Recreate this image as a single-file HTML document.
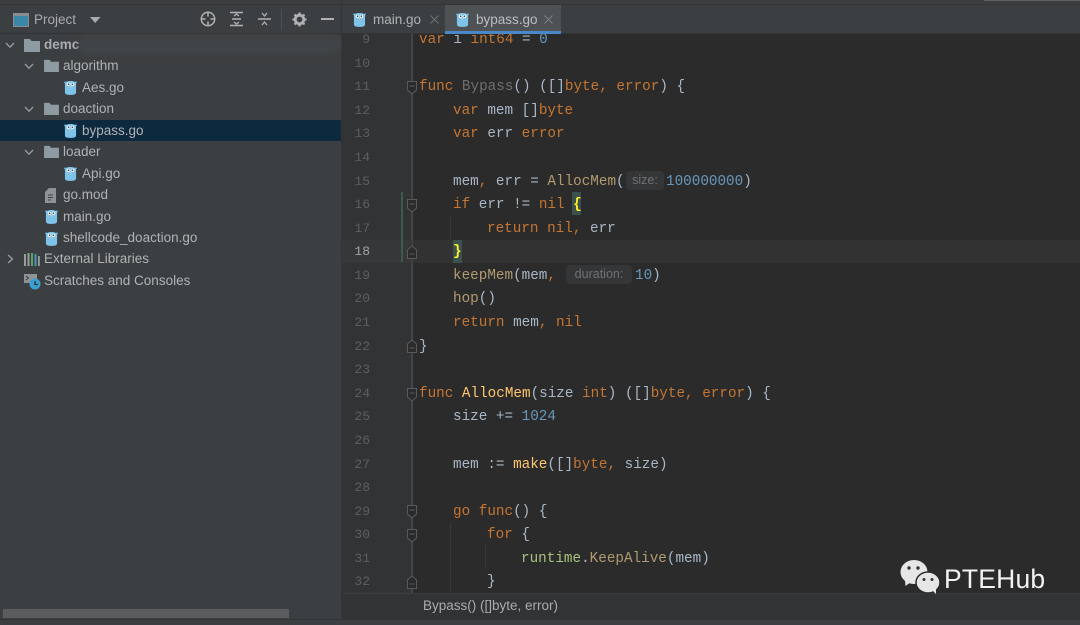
<!DOCTYPE html>
<html><head><meta charset="utf-8">
<style>
html,body{margin:0;padding:0;background:#3c3f41}
#r{position:relative;width:1080px;height:625px;overflow:hidden;background:#3c3f41;font-family:"Liberation Sans",sans-serif}
.a{position:absolute}
.t{position:absolute;font-size:13.5px;line-height:20px;margin-top:-.5px;color:#b0b3b5;white-space:nowrap;filter:blur(.25px)}
.c{position:absolute;left:0;margin-top:1px;font:14.3px/20px "Liberation Mono",monospace;color:#a9b7c6;white-space:pre;filter:blur(.3px)}
.n{position:absolute;left:342px;width:28px;margin-top:1px;text-align:right;font:13px/20px "Liberation Mono",monospace;color:#5c5f61;filter:blur(.3px)}
.k{color:#c57632}.f{color:#ffc66d}.d{color:#b09a70}.g{color:#6d6e70}.u{color:#6897bb}.r{color:#a8c27d}
.hint{position:absolute;background:#353637;border-radius:4px;color:#6f7173;font-size:12.5px;line-height:19px;text-align:center;filter:blur(.25px)}
</style></head><body><div id="r">
<svg width="0" height="0" style="position:absolute"><defs>
<symbol id="go" viewBox="0 0 14 16"><path d="M1 3.5 C0 3 0 1.8 1 1.6 L2.5 2 C4 .6 10 .6 11.500 2 L13 1.600 C14 1.800 14 3 13 3.500 L13 13 C13 15.500 11 16 7 16 C3 16 1 15.500 1 13Z" fill="#7dc3ea"/><circle cx="4.800" cy="4.500" r="1.900" fill="#e8f1f5"/><circle cx="9.200" cy="4.500" r="1.900" fill="#e8f1f5"/><circle cx="5" cy="4.500" r=".8" fill="#333"/><circle cx="9" cy="4.500" r=".8" fill="#333"/><rect x="6" y="6.500" width="2" height="1.500" fill="#d8c8a8"/></symbol>
<symbol id="fo" viewBox="0 0 16 14"><path d="M0 1 H6 L7.500 3 H16 V14 H0Z" fill="#8f9ba3"/></symbol>
<symbol id="ch" viewBox="0 0 10 10"><path d="M1 3 L5 7.200 L9 3" fill="none" stroke="#9a9d9f" stroke-width="1.300"/></symbol>
<symbol id="fd" viewBox="0 0 10 14"><path d="M.5 .5 H9.500 V9 L5 13 L.5 9Z M2.500 5 H7.500" fill="#2b2b2b" stroke="#585a5c"/></symbol>
<symbol id="fu" viewBox="0 0 10 14"><path d="M.5 13.500 H9.500 V5 L5 1 L.5 5Z M2.500 9 H7.500" fill="#2b2b2b" stroke="#585a5c"/></symbol>
</defs></svg>

<!-- top bar -->
<div class="a" style="left:0;top:0;width:1080px;height:4px;background:#3b3d3f;border-bottom:1px solid #333537"></div>
<div class="a" style="left:984px;top:0;width:96px;height:1px;background:#5e5f60"></div>
<div class="a" style="left:0;top:33px;width:1080px;height:1px;background:#323436"></div>

<!-- project toolbar -->
<svg class="a" style="left:13px;top:13px" width="16" height="14"><rect x=".5" y=".5" width="15" height="13" fill="#3b87a8" stroke="#8a8d8f"/><rect x=".5" y=".5" width="15" height="2.500" fill="#8a8d8f"/></svg>
<div class="t" style="left:34px;top:10px;color:#a9acae">Project</div>
<svg class="a" style="left:90px;top:17px" width="11" height="7"><path d="M0 0H10.500L5.200 6Z" fill="#a9acae"/></svg>
<svg class="a" style="left:200px;top:11px" width="16" height="16" fill="none" stroke="#afb1b3" stroke-width="1.500"><circle cx="8" cy="8" r="6.700"/><path d="M8 1V5.500M8 10.500V15M1 8H5.500M10.500 8H15"/></svg>
<svg class="a" style="left:229px;top:11px" width="15" height="16" fill="none" stroke="#afb1b3" stroke-width="1.500"><path d="M1 1.500H14M1 14.500H14M3 8H12"/><path d="M5 5L7.500 3L10 5M5 11L7.500 13L10 11" stroke-width="1.300"/></svg>
<svg class="a" style="left:257px;top:11px" width="15" height="16" fill="none" stroke="#afb1b3" stroke-width="1.500"><path d="M1 8H14"/><path d="M5 2L7.500 5L10 2M5 14L7.500 11L10 14" stroke-width="1.300"/></svg>
<div class="a" style="left:281px;top:9px;width:1px;height:21px;background:#4d5052"></div>
<svg class="a" style="left:292px;top:12px" width="15" height="15" viewBox="0 0 15 15"><circle cx="7.500" cy="7.500" r="4.300" fill="none" stroke="#afb1b3" stroke-width="2.800"/><path d="M7.500 .5V14.500M.5 7.500H14.500M2.500 2.500L12.500 12.500M12.500 2.500L2.500 12.500" stroke="#afb1b3" stroke-width="2.200" stroke-dasharray="2.600 9.200 2.600 0"/></svg>
<div class="a" style="left:321px;top:18px;width:13px;height:2px;background:#afb1b3"></div>

<!-- tree -->
<div class="a" style="left:0;top:120px;width:341px;height:21px;background:#0d293e"></div>
<div class="a" style="left:341px;top:0;width:1px;height:625px;background:#323436"></div>

<svg class="a" style="left:5px;top:40px" width="10" height="10"><use href="#ch"/></svg>
<svg class="a" style="left:24px;top:38px" width="16" height="14"><use href="#fo"/></svg>
<div class="t" style="left:44px;top:35px;font-weight:bold;color:#a9acae">demc</div>
<div class="a" style="left:78px;top:36px;width:265px;height:18px;background:#434648;border-radius:9px;opacity:.75;filter:blur(2px)"></div>

<svg class="a" style="left:24px;top:61px" width="10" height="10"><use href="#ch"/></svg>
<svg class="a" style="left:44px;top:59px" width="15" height="13"><use href="#fo"/></svg>
<div class="t" style="left:63px;top:56px">algorithm</div>
<svg class="a" style="left:64px;top:80px" width="13" height="15"><use href="#go"/></svg>
<div class="t" style="left:82px;top:78px">Aes.go</div>

<svg class="a" style="left:24px;top:104px" width="10" height="10"><use href="#ch"/></svg>
<svg class="a" style="left:44px;top:102px" width="15" height="13"><use href="#fo"/></svg>
<div class="t" style="left:63px;top:99px">doaction</div>
<svg class="a" style="left:64px;top:123px" width="13" height="15"><use href="#go"/></svg>
<div class="t" style="left:82px;top:121px">bypass.go</div>

<svg class="a" style="left:24px;top:147px" width="10" height="10"><use href="#ch"/></svg>
<svg class="a" style="left:44px;top:145px" width="15" height="13"><use href="#fo"/></svg>
<div class="t" style="left:63px;top:142px">loader</div>
<svg class="a" style="left:64px;top:166px" width="13" height="15"><use href="#go"/></svg>
<div class="t" style="left:82px;top:164px">Api.go</div>

<svg class="a" style="left:45px;top:188px" width="12" height="15"><path d="M0 4L4 0H11V15H0Z" fill="#8f9396"/><path d="M3 7H8M3 9.500H8M3 12H6" stroke="#3c3f41"/></svg>
<div class="t" style="left:63px;top:185px">go.mod</div>
<svg class="a" style="left:45px;top:209px" width="13" height="15"><use href="#go"/></svg>
<div class="t" style="left:63px;top:207px">main.go</div>
<svg class="a" style="left:45px;top:231px" width="13" height="15"><use href="#go"/></svg>
<div class="t" style="left:63px;top:228px">shellcode_doaction.go</div>

<svg class="a" style="left:5px;top:254px" width="10" height="10"><path d="M3 1L7.500 5L3 9" fill="none" stroke="#9a9d9f" stroke-width="1.300"/></svg>
<svg class="a" style="left:24px;top:253px" width="16" height="13"><rect x="0" y="1" width="2" height="12" fill="#9a9d9f"/><rect x="3.500" y="0" width="2" height="13" fill="#9a9d9f"/><rect x="7" y="0" width="2" height="13" fill="#5da35d"/><rect x="10.500" y="1" width="2" height="12" fill="#4b94bd"/><rect x="14" y="3" width="1.800" height="10" fill="#9a9d9f"/></svg>
<div class="t" style="left:44px;top:249px">External Libraries</div>
<svg class="a" style="left:24px;top:273px" width="17" height="17"><rect x="0" y="1" width="13" height="9" fill="#8f9396"/><path d="M2 3L4.500 5L2 7" fill="none" stroke="#3c3f41"/><circle cx="11" cy="11" r="5.500" fill="#3b9fd1"/><path d="M11 8V11.500H14" fill="none" stroke="#2b2b2b" stroke-width="1.200"/></svg>
<div class="t" style="left:44px;top:271px">Scratches and Consoles</div>

<!-- sidebar scrollbar -->
<div class="a" style="left:3px;top:609px;width:286px;height:9px;background:#5b5c5d"></div>

<!-- tabs -->
<div class="a" style="left:342px;top:5px;width:738px;height:28px;background:#3c3f41"></div>
<svg class="a" style="left:353px;top:12px" width="13" height="15"><use href="#go"/></svg>
<div class="t" style="left:373px;top:10px">main.go</div>
<svg class="a" style="left:430px;top:15px" width="9" height="9"><path d="M.5 .5L8.500 8.500M8.500 .5L.5 8.500" stroke="#6e7072"/></svg>
<div class="a" style="left:445px;top:5px;width:116px;height:27px;background:#4e5254"></div>
<div class="a" style="left:445px;top:31px;width:116px;height:3px;background:#4a88c7"></div>
<svg class="a" style="left:456px;top:12px" width="13" height="15"><use href="#go"/></svg>
<div class="t" style="left:476px;top:10px;color:#bcbfc1">bypass.go</div>
<svg class="a" style="left:544px;top:15px" width="9" height="9"><path d="M.5 .5L8.500 8.500M8.500 .5L.5 8.500" stroke="#7d7f81"/></svg>

<!-- editor -->
<div class="a" style="left:342px;top:34px;width:738px;height:559px;background:#2b2b2b"></div>
<div class="a" style="left:342px;top:34px;width:70px;height:559px;background:#313335"></div>
<div class="a" style="left:411px;top:34px;width:2px;height:559px;background:#434547"></div>
<div class="a" style="left:413px;top:240px;width:667px;height:23px;background:#323232"></div>
<div class="a" style="left:342px;top:240px;width:70px;height:23px;background:#353739"></div>
<div class="a" style="left:401px;top:192px;width:2px;height:70px;background:#3f5a4d"></div>

<!-- indent guides -->
<div class="a" style="left:450px;top:216px;width:1px;height:24px;background:#393939"></div>
<div class="a" style="left:450px;top:522px;width:1px;height:70px;background:#393939"></div>
<div class="a" style="left:485px;top:545px;width:1px;height:24px;background:#393939"></div>

<!-- brace highlights -->
<div class="a" style="left:572px;top:192px;width:9px;height:23px;background:#3b514d"></div>
<div class="a" style="left:453px;top:240px;width:9px;height:23px;background:#3b514d"></div>

<!-- fold marks -->
<svg class="a" style="left:407px;top:81px" width="10" height="14"><use href="#fd"/></svg>
<svg class="a" style="left:407px;top:199px" width="10" height="14"><use href="#fd"/></svg>
<svg class="a" style="left:407px;top:245px" width="10" height="14"><use href="#fu"/></svg>
<svg class="a" style="left:407px;top:339px" width="10" height="14"><use href="#fu"/></svg>
<svg class="a" style="left:407px;top:388px" width="10" height="14"><use href="#fd"/></svg>
<svg class="a" style="left:407px;top:505px" width="10" height="14"><use href="#fd"/></svg>
<svg class="a" style="left:407px;top:529px" width="10" height="14"><use href="#fd"/></svg>
<svg class="a" style="left:407px;top:575px" width="10" height="14"><use href="#fu"/></svg>

<!-- line numbers -->
<div class="n" style="top:29px">9</div>
<div class="n" style="top:53px">10</div>
<div class="n" style="top:76px">11</div>
<div class="n" style="top:100px">12</div>
<div class="n" style="top:123px">13</div>
<div class="n" style="top:147px">14</div>
<div class="n" style="top:171px">15</div>
<div class="n" style="top:194px">16</div>
<div class="n" style="top:218px">17</div>
<div class="n" style="top:241px;color:#a4a3a3">18</div>
<div class="n" style="top:265px">19</div>
<div class="n" style="top:288px">20</div>
<div class="n" style="top:312px">21</div>
<div class="n" style="top:336px">22</div>
<div class="n" style="top:359px">23</div>
<div class="n" style="top:383px">24</div>
<div class="n" style="top:406px">25</div>
<div class="n" style="top:430px">26</div>
<div class="n" style="top:454px">27</div>
<div class="n" style="top:477px">28</div>
<div class="n" style="top:501px">29</div>
<div class="n" style="top:524px">30</div>
<div class="n" style="top:548px">31</div>
<div class="n" style="top:571px">32</div>

<!-- code -->
<div class="a" style="left:0;top:34px;width:1080px;height:559px;overflow:hidden">
<div class="c" style="left:419px;top:-5px"><span class="k">var</span> i <span class="k">int64</span> = <span class="u">0</span></div>
</div>
<div class="c" style="left:419px;top:76px"><span class="k">func</span> <span class="g">Bypass</span>() ([]<span class="k">byte</span><span class="k">,</span> <span class="k">error</span>) {</div>
<div class="c" style="left:453px;top:100px"><span class="k">var</span> mem []<span class="k">byte</span></div>
<div class="c" style="left:453px;top:123px"><span class="k">var</span> err <span class="k">error</span></div>
<div class="c" style="left:453px;top:171px">mem<span class="k">,</span> err = <span class="d">AllocMem</span>(</div>
<div class="hint" style="left:626px;top:171px;width:38px;height:19px">size:</div>
<div class="c" style="left:666px;top:171px"><span class="u">100000000</span>)</div>
<div class="c" style="left:453px;top:194px"><span class="k">if</span> err != <span class="k">nil</span> <span style="color:#ffef28;font-weight:bold">{</span></div>
<div class="c" style="left:487px;top:218px"><span class="k">return</span> <span class="k">nil,</span> err</div>
<div class="c" style="left:453px;top:241px;color:#ffef28;font-weight:bold">}</div>
<div class="c" style="left:453px;top:265px"><span class="d">keepMem</span>(mem<span class="k">,</span></div>
<div class="hint" style="left:566px;top:265px;width:66px;height:19px">duration:</div>
<div class="c" style="left:635px;top:265px"><span class="u">10</span>)</div>
<div class="c" style="left:453px;top:288px"><span class="d">hop</span>()</div>
<div class="c" style="left:453px;top:312px"><span class="k">return</span> mem<span class="k">,</span> <span class="k">nil</span></div>
<div class="c" style="left:419px;top:336px">}</div>
<div class="c" style="left:419px;top:383px"><span class="k">func</span> <span class="f">AllocMem</span>(size <span class="k">int</span>) ([]<span class="k">byte,</span> <span class="k">error</span>) {</div>
<div class="c" style="left:453px;top:406px">size += <span class="u">1024</span></div>
<div class="c" style="left:453px;top:454px">mem := <span class="f">make</span>([]<span class="k">byte,</span> size)</div>
<div class="c" style="left:453px;top:501px"><span class="k">go func</span>() {</div>
<div class="c" style="left:487px;top:524px"><span class="k">for</span> {</div>
<div class="c" style="left:521px;top:548px"><span class="r">runtime</span>.<span class="d">KeepAlive</span>(mem)</div>
<div class="c" style="left:487px;top:571px">}</div>

<!-- breadcrumb -->
<div class="a" style="left:342px;top:593px;width:738px;height:26px;background:#313335;border-top:1px solid #3a3c3e;box-sizing:border-box"></div>
<div class="t" style="left:423px;top:596px;font-size:13.5px;color:#a9acae">Bypass() ([]byte, error)</div>
<div class="a" style="left:0;top:619px;width:1080px;height:6px;background:#3c3f41;border-top:1px solid #333537;box-sizing:border-box"></div>

<!-- watermark -->
<svg class="a" style="left:900px;top:559px" width="41" height="35" viewBox="0 0 41 35"><ellipse cx="14" cy="13" rx="13.500" ry="12" fill="#e6e6e6"/><path d="M5 21L5.500 27L11 23Z" fill="#e6e6e6"/><ellipse cx="28" cy="23.500" rx="12" ry="10.500" fill="#e6e6e6" stroke="#2b2b2b" stroke-width="1.500"/><path d="M33 32L36 35L36 29Z" fill="#e6e6e6"/><circle cx="9" cy="9" r="1.700" fill="#333"/><circle cx="18" cy="9" r="1.700" fill="#333"/><circle cx="24" cy="20.500" r="1.500" fill="#333"/><circle cx="32" cy="20.500" r="1.500" fill="#333"/></svg>
<div class="a" style="left:944px;top:563px;font-size:26.5px;line-height:32px;color:#f2f2f2;letter-spacing:.2px">PTEHub</div>
</div></body></html>
